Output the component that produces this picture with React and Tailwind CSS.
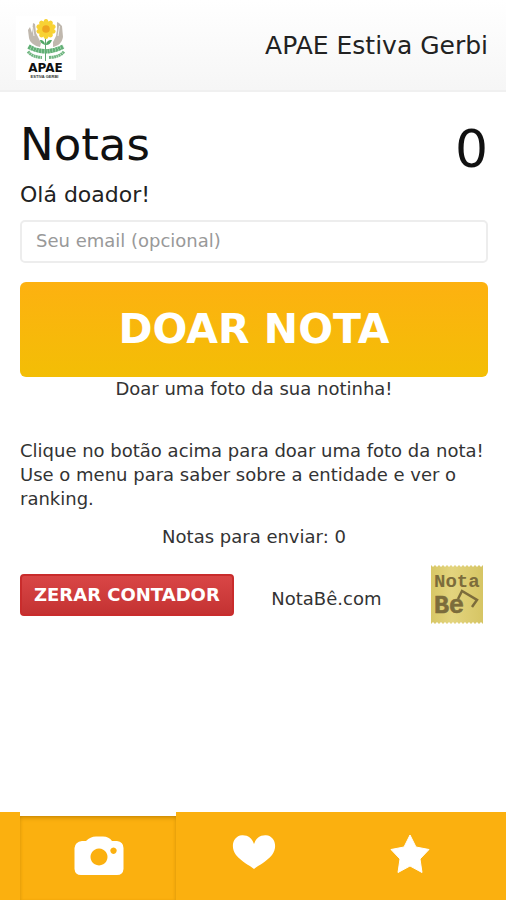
import React from "react";

function ApaeLogo() {
  const petals = [0, 36, 72, 108, 144, 180, 216, 252, 288, 324];
  return (
    <svg className="h-16 w-[60px] bg-white" viewBox="0 0 60 64" role="img" aria-label="APAE Estiva Gerbi">
      <g fill="#c0b8ae">
        <path d="M17 7 L19 8 L20 17 L22 21 L25 27 L24 31 C19 30 14 27 13 22 L12 14 L14 11 L16 17 Z" />
        <path d="M41 6 L43 7 L46 10 L47 21 C46 27 42 30 37 31 L37 26 L40 20 L41 14 Z" />
      </g>
      <g stroke="#fff" strokeWidth=".8" fill="none">
        <path d="M16.500 11 L18 20 M43.500 10 L42 20" />
      </g>
      <path d="M29.500 20 L29.500 45" stroke="#5fa873" strokeWidth="1" fill="none" />
      <g fill="#4fa665">
        <path d="M29 29 C26 28 24 26 24 24 C27 24 29 26 29 29 Z M30 29 C30 26 32 24 36 24 C35 27 33 29 30 29 Z" />
      </g>
      <path d="M12.500 30.500 Q29 40 47.500 30.500" stroke="#62b076" strokeWidth="4.500" strokeDasharray="2.500 .3" fill="none" />
      <path d="M12 35.500 Q16 41 26 41.500 M33 41.500 Q44 41 48 35.500" stroke="#70b681" strokeWidth="3" strokeDasharray="2 .4" fill="none" />
      {petals.map((angle) => (
        <ellipse key={angle} cx="30" cy="7.500" rx="2.700" ry="4.500" fill="#f8d234" transform={`rotate(${angle} 30 13)`} />
      ))}
      <circle cx="30" cy="13" r="3.800" fill="#efa51f" />
      <text x="29.500" y="56" textAnchor="middle" fontSize="12" fontWeight="700" fill="#111" fontFamily="DejaVu Sans, sans-serif">APAE</text>
      <text x="28.500" y="62" textAnchor="middle" fontSize="4" fontWeight="700" fill="#333" fontFamily="Liberation Sans, sans-serif">ESTIVA GERBI</text>
    </svg>
  );
}

function NotaBeLogo() {
  return (
    <svg className="h-[59px] w-[52px]" viewBox="0 0 52 59" role="img" aria-label="Nota Bê">
      <defs>
        <linearGradient id="paper" x1="0" x2="1">
          <stop offset="0" stopColor="#d8c766" />
          <stop offset=".4" stopColor="#e3d47e" />
          <stop offset="1" stopColor="#d6c564" />
        </linearGradient>
      </defs>
      <path
        fill="url(#paper)"
        d="M0 0 l2 2 l2 -2 l2 2 l2 -2 l2 2 l2 -2 l2 2 l2 -2 l2 2 l2 -2 l2 2 l2 -2 l2 2 l2 -2 l2 2 l2 -2 l2 2 l2 -2 l2 2 l2 -2 l2 2 l2 -2 l2 2 l2 -2 l2 2 l2 -2 V59 l-2 -2 l-2 2 l-2 -2 l-2 2 l-2 -2 l-2 2 l-2 -2 l-2 2 l-2 -2 l-2 2 l-2 -2 l-2 2 l-2 -2 l-2 2 l-2 -2 l-2 2 l-2 -2 l-2 2 l-2 -2 l-2 2 l-2 -2 l-2 2 l-2 -2 l-2 2 l-2 -2 l-2 2 Z"
      />
      <text x="3" y="22" fontSize="19" fontWeight="700" fill="#7c6c3b" fontFamily="Liberation Mono, monospace">Nota</text>
      <text x="3" y="48" fontSize="25" fontWeight="700" fill="#7c6c3b" stroke="#7c6c3b" strokeWidth=".6" fontFamily="Liberation Mono, monospace">Be</text>
      <path d="M27 34 L31 26 L46 35 L41 42" fill="none" stroke="#7c6c3b" strokeWidth="2.500" />
    </svg>
  );
}

function CameraIcon() {
  return (
    <svg className="h-10 w-[50px]" viewBox="0 0 50 40" aria-hidden="true">
      <path
        fill="#fff"
        fillRule="evenodd"
        d="M8 5 H12 C15 2 18 .5 22 .5 H29 C33 .5 36 2 38 5 H43 Q49.500 6 49.500 12 V33 Q49 39 43 39 H7 Q1 39 .5 33 V12 Q1 6 8 5 Z M25 12.500 a8.500 8.500 0 1 0 .01 0 Z M39.500 11.500 a3.200 3.200 0 1 0 .01 0 Z"
      />
    </svg>
  );
}

function HeartIcon() {
  return (
    <svg className="h-[34px] w-11" viewBox="0 0 44 34" aria-hidden="true">
      <path fill="#fff" d="M22 34 C17 30 10 27 4 20 C-2 12 1 1 10 0.300 C16 0 20 3 22 9 C24 3 28 0 34 0.300 C43 1 46 12 40 20 C34 27 27 30 22 34 Z" />
    </svg>
  );
}

function StarIcon() {
  return (
    <svg className="h-10 w-10" viewBox="0 0 40 40" aria-hidden="true">
      <path fill="#fff" stroke="#fff" strokeLinejoin="round" strokeWidth="1" d="M20 1 L26 13 L39 15.500 L30 25 L32 38.500 L20 32 L8 38.500 L10 25 L1 15.500 L14 13 Z" />
    </svg>
  );
}

export default function App() {
  return (
    <div className="flex min-h-screen flex-col bg-white font-['DejaVu_Sans',sans-serif] text-[18px] leading-6 text-[#333]">
      <header className="flex items-center justify-between border-b-2 border-[#f0f0f0] bg-linear-to-b from-white to-[#f6f6f6] pt-4 pr-[18px] pb-2.5 pl-4">
        <ApaeLogo />
        <span className="pb-1 text-[25px] leading-8 text-[#222]">APAE Estiva Gerbi</span>
      </header>

      <main className="grow pt-[27px] pr-[18px] pb-6 pl-5">
        <div className="flex items-center justify-between text-[#111]">
          <h1 className="pb-2 text-[45px] leading-[52px]">Notas</h1>
          <span className="text-[52px] leading-[60px]">0</span>
        </div>
        <label htmlFor="email" className="block text-[22px] leading-8 text-[#222]">
          Olá doador!
        </label>
        <input
          id="email"
          type="email"
          placeholder="Seu email (opcional)"
          className="mt-[9px] block h-[43px] w-full rounded-[5px] border-2 border-[#ededed] px-3.5 pb-0.5 text-[18px] outline-none placeholder:text-[#999]"
        />
        <button type="button" className="mt-[19px] block h-[95px] w-full rounded-md bg-linear-to-b from-[#fdb110] to-[#f3be05] pb-0.5 text-[41px] font-bold text-white">
          DOAR NOTA
        </button>
        <p className="text-center">Doar uma foto da sua notinha!</p>

        <p className="mt-[38px]">
          Clique no botão acima para doar uma foto da nota! Use o menu para saber sobre a entidade e ver o ranking.
        </p>
        <p className="mt-3.5 text-center">Notas para enviar: 0</p>

        <div className="mt-4 flex items-center justify-between pr-[5px]">
          <button type="button" className="h-[42px] rounded border-2 border-[#c92c2c] bg-linear-to-b from-[#d94646] to-[#c43232] px-3 text-[18px] font-bold whitespace-nowrap text-white">
            ZERAR CONTADOR
          </button>
          <a href="#notabe" className="pt-2 pr-3">NotaBê.com</a>
          <NotaBeLogo />
        </div>
      </main>

      <nav className="grid h-[88px] grid-cols-3 bg-[#fbb00f] pr-[18px] pl-5">
        <a href="#camera" aria-label="Doar nota" aria-current="page" className="flex items-center justify-center border-t-4 border-white pb-1 pl-0.5 shadow-[inset_0_4px_5px_-3px_#bd7f00,inset_2px_0_3px_-1px_#e8a20c,inset_-2px_0_3px_-1px_#e8a20c]">
          <CameraIcon />
        </a>
        <a href="#entidade" aria-label="Entidade" className="flex items-center justify-center pb-2">
          <HeartIcon />
        </a>
        <a href="#ranking" aria-label="Ranking" className="flex items-center justify-center pb-1">
          <StarIcon />
        </a>
      </nav>
    </div>
  );
}
